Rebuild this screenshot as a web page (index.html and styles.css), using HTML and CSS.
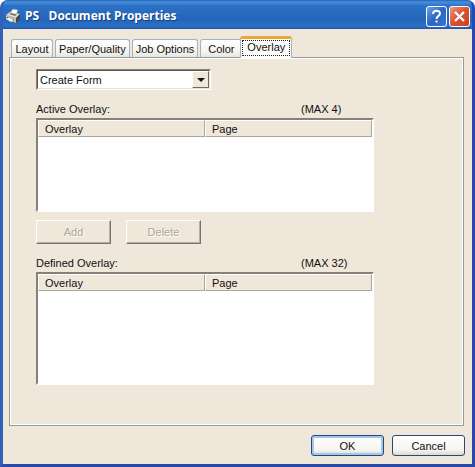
FILE: index.html
```html
<!DOCTYPE html>
<html lang="en">
<head>
    <meta charset="UTF-8">
    <meta name="viewport" content="width=device-width, initial-scale=1.0">
    <title>PS Document Properties</title>
    <link rel="stylesheet" href="styles.css">
</head>
<body>
    <div class="window">
        <header class="titlebar">
            <svg class="app-icon" width="16" height="16" viewBox="0 0 16 16" aria-hidden="true">
                <path d="M5 5 L8 1 L13 2 L11 7 Z" fill="#fff" stroke="#8a8f98" stroke-width=".6"/>
                <path d="M1 7 L5 4 L15 6 L11 10 Z" fill="#e6e2d6"/>
                <path d="M4 6 L6 5 L12 6.500 L10 8 Z" fill="#77716a"/>
                <path d="M1 7 L11 10 V15 L1 11 Z" fill="#c4c0b6"/>
                <path d="M11 10 L15 6 V11 L11 15 Z" fill="#4a4845"/>
                <path d="M2 9 L9 11.500 V13 L2 10.500 Z" fill="#3b3938"/>
                <path d="M1 11 L4 9.500 L9 12 L6 14 Z" fill="#f6f5f0"/>
            </svg>
            <h1>PS&nbsp;&nbsp; Document Properties</h1>
            <button type="button" class="caption-button help" aria-label="Help">
                <svg width="19" height="19" viewBox="0 0 19 19">
                    <path d="M6 7 C6 2.800 13 2.800 13 6.500 C13 9 9.500 8.800 9.500 12" fill="none" stroke="#fff" stroke-width="2"/>
                    <rect x="8.500" y="13.500" width="2" height="2" fill="#fff"/>
                </svg>
            </button>
            <button type="button" class="caption-button close" aria-label="Close">
                <svg width="19" height="19" viewBox="0 0 19 19">
                    <path d="M5 5 L14 14 M14 5 L5 14" stroke="#fff" stroke-width="2.300"/>
                </svg>
            </button>
        </header>

        <main class="content">
            <div class="tabs" role="tablist">
                <button type="button" class="tab" role="tab">Layout</button>
                <button type="button" class="tab" role="tab">Paper/Quality</button>
                <button type="button" class="tab" role="tab">Job Options</button>
                <button type="button" class="tab" role="tab">Color</button>
                <button type="button" class="tab active" role="tab" aria-selected="true"><span>Overlay</span></button>
            </div>

            <section class="panel" role="tabpanel">
                <div class="combo">
                    <select aria-label="Form action">
                        <option>Create Form</option>
                    </select>
                    <span class="combo-arrow"></span>
                </div>

                <div class="list-label">
                    <span id="activeLabel">Active Overlay:</span>
                    <span class="limit">(MAX 4)</span>
                </div>
                <div class="list active-list">
                    <table aria-labelledby="activeLabel">
                        <thead><tr><th>Overlay</th><th>Page</th></tr></thead>
                    </table>
                </div>

                <div class="list-buttons">
                    <button type="button" disabled>Add</button>
                    <button type="button" disabled>Delete</button>
                </div>

                <div class="list-label">
                    <span id="definedLabel">Defined Overlay:</span>
                    <span class="limit">(MAX 32)</span>
                </div>
                <div class="list defined-list">
                    <table aria-labelledby="definedLabel">
                        <thead><tr><th>Overlay</th><th>Page</th></tr></thead>
                    </table>
                </div>
            </section>

            <footer class="actions">
                <button type="button" class="default">OK</button>
                <button type="button">Cancel</button>
            </footer>
        </main>
    </div>
</body>
</html>
```
FILE: styles.css
```css
* {
    box-sizing: border-box;
}
body {
    margin: 0;
    background: #fff;
    color: #111;
    font-family: "Liberation Sans", Arial, sans-serif;
    font-size: 11px;
    line-height: 14px;
}
button, select {
    font: inherit;
    color: inherit;
}
.window {
    display: flex;
    flex-direction: column;
    min-height: 100vh;
    border: 3px solid #2a4aa8;
    border-top: 0;
    border-left-color: #2f62b8;
    border-radius: 8px 8px 0 0;
    background: #2a66bd;
    overflow: hidden;
}

/* title bar */
.titlebar {
    display: flex;
    align-items: center;
    height: 29px;
    padding: 3px 2px 0 2px;
    background: linear-gradient(#2a62b4 0, #4590dc 2px, #2c70c6 6px, #2466b8 20px, #2a72c8 26px, #2355a4 29px);
}
.titlebar h1 {
    flex: 1;
    margin: 0 0 0 4px;
    color: #fff;
    font-family: "Open Sans", sans-serif;
    font-size: 12px;
    font-weight: bold;
    line-height: 16px;
    text-shadow: 1px 1px #173f80;
}
.caption-button {
    width: 21px;
    height: 21px;
    margin-left: 2px;
    padding: 0;
    border: 1px solid #fff;
    border-radius: 3px;
}
.caption-button svg {
    display: block;
}
.help {
    background: linear-gradient(135deg, #6ba3e6, #2a66c4 50%, #3476d0);
}
.close {
    background: linear-gradient(135deg, #ee9a80, #d9502f 50%, #c9431f);
}

.content {
    flex: 1;
    display: flex;
    flex-direction: column;
    padding: 7px 8px 8px 6px;
    background: #eee7da;
}

/* tabs */
.tabs {
    display: flex;
    align-items: flex-end;
    gap: 2px;
    height: 21px;
    padding-left: 2px;
}
.tab {
    min-width: 42px;
    height: 18px;
    padding: 0 3px;
    border: 1px solid #a3b4bd;
    border-bottom: 0;
    border-radius: 3px 3px 0 0;
    background: linear-gradient(#fff, #f4f3ee 70%, #e6e5e0);
    white-space: nowrap;
}
.tab.active {
    position: relative;
    height: 22px;
    margin: 0 0 -1px -4px;
    padding: 0 1px 2px;
    border-top: 3px solid #eba63a;
    background: #fcfcfa;
}
.tab.active span {
    display: block;
    height: 16px;
    padding: 0 4px;
    border: 1px dotted #222;
    line-height: 12px;
}
.panel {
    flex: 1;
    padding: 11px 26px 38px;
    border: 1px solid #919b9c;
    box-shadow: inset 1px 1px #fff, inset -1px -1px #fff;
}

/* drop-down */
.combo {
    position: relative;
    width: 175px;
    border: 1px solid;
    border-color: #85817a #fff #fff #85817a;
}
.combo select {
    display: block;
    width: 100%;
    height: 19px;
    padding: 0 20px 0 2px;
    border: 1px solid;
    border-color: #5c5954 #e6dfd2 #e6dfd2 #5c5954;
    border-radius: 0;
    background: #fff;
    appearance: none;
}
.combo-arrow {
    position: absolute;
    top: 1px;
    right: 1px;
    width: 17px;
    height: 17px;
    border: 1px solid;
    border-color: #fff #6e6a64 #6e6a64 #fff;
    background: #eee7da;
    pointer-events: none;
}
.combo-arrow::after {
    content: "";
    position: absolute;
    top: 6px;
    left: 4px;
    border: 4px solid transparent;
    border-top-color: #111;
    border-bottom: 0;
}

/* overlay lists */
.list-label {
    display: flex;
    justify-content: space-between;
    max-width: 338px;
    margin-top: 12px;
}
.limit {
    width: 73px;
}
.list {
    max-width: 338px;
    margin-top: 2px;
    border: 2px solid;
    border-color: #85817a #fff #fff #85817a;
    background: #fff;
}
.active-list {
    height: 94px;
}
.defined-list {
    height: 113px;
}
.list table {
    width: 100%;
    border-spacing: 0;
    table-layout: fixed;
}
.list th {
    height: 17px;
    padding: 0 6px;
    border: 1px solid;
    border-color: #fff #a9a79c #a9a79c #fff;
    background: #eee7da;
    font-weight: normal;
    text-align: left;
}
.list-buttons {
    display: flex;
    gap: 15px;
    margin-top: 8px;
}
.list-buttons button {
    width: 75px;
    height: 24px;
    border: 1px solid;
    border-color: #fff #77736c #77736c #fff;
    background: #eee7da;
    box-shadow: inset -1px -1px #b5afa3;
    color: #aaa598;
    text-shadow: 1px 1px #fff;
}

/* bottom buttons */
.actions {
    display: flex;
    justify-content: flex-end;
    gap: 8px;
    margin: 9px -1px 0 0;
}
.actions button {
    width: 73px;
    height: 21px;
    padding: 0;
    border: 1px solid #234a78;
    border-radius: 3px;
    background: linear-gradient(#fff, #f5f4ef 75%, #dcd7cb);
}
.actions .default {
    box-shadow: inset 0 0 0 2px #a5c5ee;
}
```
